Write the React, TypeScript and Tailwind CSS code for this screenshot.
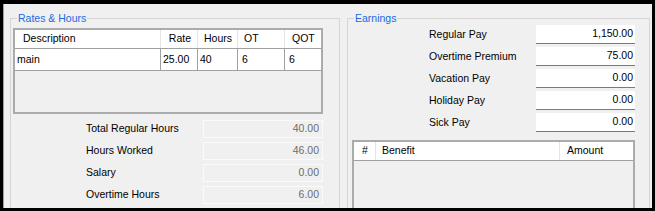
import React from "react";

const rateCols = [
  { head: "Description", w: "w-[146px]", hp: "pl-[8px]", val: "main", vp: "pl-[2px]", right: false },
  { head: "Rate", w: "w-[37px]", hp: "pr-[6px]", val: "25.00", vp: "pl-[2px]", right: true },
  { head: "Hours", w: "w-[40px]", hp: "pl-[6px]", val: "40", vp: "pl-[2px]", right: false },
  { head: "OT", w: "w-[47px]", hp: "pl-[6px]", val: "6", vp: "pl-[4px]", right: false },
  { head: "QOT", w: "w-[36px]", hp: "pl-[7px]", val: "6", vp: "pl-[4px]", right: false },
];

const totals = [
  ["Total Regular Hours", "40.00"],
  ["Hours Worked", "46.00"],
  ["Salary", "0.00"],
  ["Overtime Hours", "6.00"],
];

const earnings = [
  ["Regular Pay", "1,150.00"],
  ["Overtime Premium", "75.00"],
  ["Vacation Pay", "0.00"],
  ["Holiday Pay", "0.00"],
  ["Sick Pay", "0.00"],
];

function GroupBox({ title, width, children }: { title: string; width: string; children: React.ReactNode }) {
  return (
    <div className={`relative ${width} h-[200px] shrink-0 border border-[#d5d5d5]`}>
      <span className="absolute left-[6px] top-[-7px] bg-[#f0f0f0] px-[1px] leading-[12px] text-[#1a6ae0]">
        {title}
      </span>
      {children}
    </div>
  );
}

export default function App() {
  return (
    <div className="w-[655px] h-[211px] bg-black pt-[4px] px-[3px] pb-[3px] font-['Liberation_Sans',Arial,sans-serif] text-[10.5px] text-black">
      <div className="h-full bg-[#f0f0f0] border-l border-[#a0a0a0] flex gap-[7px] pl-[6px] pt-[14px] overflow-hidden">
        <GroupBox title="Rates & Hours" width="w-[330px]">
          <div className="pt-[9px] flex flex-col">
            <div className="ml-[2px] w-[310px] h-[86px] border-2 border-[#ababab] bg-[#f0f0f0] flex flex-col">
              <div className="flex h-[19px] bg-white border-b border-[#a0a0a0]">
                {rateCols.map((c, i) => (
                  <div
                    key={c.head}
                    className={`${c.w} ${c.hp} flex items-center ${c.right ? "justify-end" : ""} ${
                      i < rateCols.length - 1 ? "border-r border-[#e3e3e3]" : ""
                    }`}
                  >
                    {c.head}
                  </div>
                ))}
              </div>
              <div className="flex h-[22px] bg-white border-b border-[#a0a0a0]">
                {rateCols.map((c, i) => (
                  <div
                    key={c.head}
                    className={`${c.w} ${c.vp} flex items-center ${
                      i < rateCols.length - 1 ? "border-r border-[#a0a0a0]" : ""
                    }`}
                  >
                    {c.val}
                  </div>
                ))}
              </div>
            </div>
            <div className="mt-[6px] flex flex-col gap-[4px]">
              {totals.map(([label, value]) => (
                <div key={label} className="flex items-center h-[18px] pl-[75px]">
                  <span className="w-[117px]">{label}</span>
                  <div className="w-[120px] h-[18px] border border-[#fafafa] bg-[#f0f0f0] text-[#6d6d6d] flex items-center justify-end pr-[3px]">
                    {value}
                  </div>
                </div>
              ))}
            </div>
          </div>
        </GroupBox>

        <GroupBox title="Earnings" width="w-[303px]">
          <div className="pt-[6px] flex flex-col">
            <div className="flex flex-col gap-[3px]">
              {earnings.map(([label, value]) => (
                <div key={label} className="flex items-center h-[19px] pl-[81px]">
                  <span className="w-[107px]">{label}</span>
                  <div className="w-[99px] h-[19px] bg-white border-b border-[#7a7a7a] flex items-center justify-end pr-[2px]">
                    {value}
                  </div>
                </div>
              ))}
            </div>
            <div className="ml-[4px] mt-[8px] w-[283px] h-[80px] border-2 border-[#ababab] bg-[#f0f0f0]">
              <div className="flex h-[19px] bg-white border-b border-[#a0a0a0]">
                <div className="w-[22px] pl-[8px] flex items-center border-r border-[#e3e3e3]">#</div>
                <div className="w-[184px] pl-[6px] flex items-center border-r border-[#e3e3e3]">Benefit</div>
                <div className="flex-1 pl-[7px] flex items-center">Amount</div>
              </div>
            </div>
          </div>
        </GroupBox>
      </div>
    </div>
  );
}
